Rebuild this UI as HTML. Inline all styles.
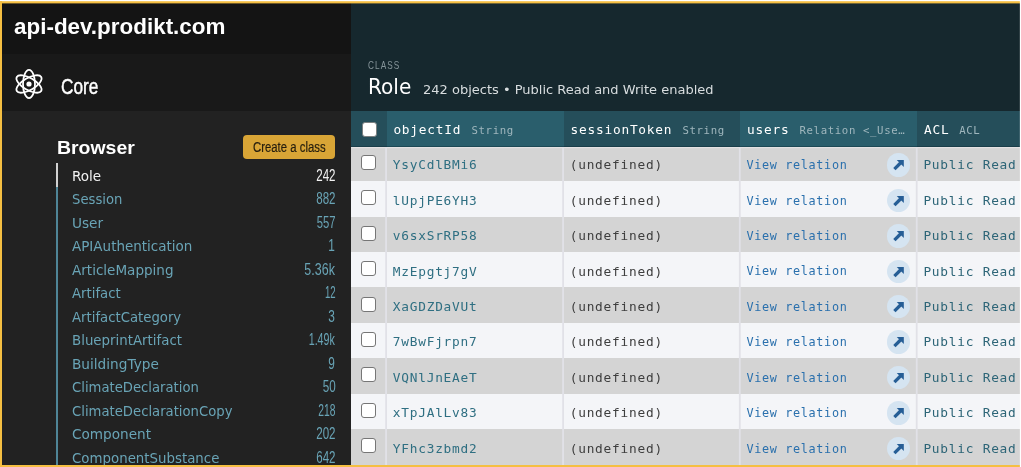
<!DOCTYPE html>
<html lang="en"><head><meta charset="utf-8"><title>Parse Dashboard</title>
<style>
*{box-sizing:border-box;margin:0;padding:0}
html,body{width:1021px;height:467px;overflow:hidden;background:#fff}
body{position:relative;font-family:"Liberation Sans",sans-serif}
#wrap{position:absolute;left:0;top:0;width:1021px;height:467px;will-change:transform}
.abs,.t{position:absolute}
.t{white-space:nowrap;line-height:1;top:0}
#side{left:2px;top:3px;width:349px;height:462px;background:#222;overflow:hidden}
#hdr{left:2px;top:3px;width:349px;height:51px;background:#141414}
#core{left:2px;top:54px;width:349px;height:57px;background:#191919}
#btn{left:243.4px;top:135px;width:91.6px;height:24px;border-radius:4px;background:#d9a536}
#line{left:56px;top:187px;width:2px;height:280px;background:#4f8597}
#linesel{left:56px;top:163px;width:2px;height:24px;background:#d2d2d2}
#main{left:351px;top:3px;width:669px;height:462px;background:#16282e;overflow:hidden}
#th{left:351px;top:111px;width:669px;height:36px;background:#254e5a}
.cb{position:absolute;left:361.3px;width:15px;height:15px;border:1px solid #767676;border-radius:3px;background:#fff}
.row{position:absolute;left:351px;width:669px;height:37px;background:#d4d4d4}
.sep{position:absolute;top:147px;width:1px;height:320px;background:#e1e1e7}
.row.e{background:#f4f5f8}
.ar{position:absolute;left:886.6px;width:23.5px;height:23.5px;border-radius:50%;background:#d5e4f1}
.fr{position:absolute;background:#f5bf42}
.f0{font:bold 21.2px 'Liberation Sans','DejaVu Sans',sans-serif;line-height:1;color:#fff;}
.f1{font:21.3px 'Liberation Sans','DejaVu Sans',sans-serif;line-height:1;color:#fff;-webkit-text-stroke:.42px #fff;}
.f2{font:bold 19px 'Liberation Sans','DejaVu Sans',sans-serif;line-height:1;color:#fff;}
.f3{font:15.3px 'Liberation Sans','DejaVu Sans',sans-serif;line-height:1;color:#241d0e;-webkit-text-stroke:.2px #241d0e;}
.f4{font:14.2px 'DejaVu Sans','Liberation Sans',sans-serif;line-height:1;color:#f2f2f2;}
.f5{font:15.9px 'Liberation Sans','DejaVu Sans',sans-serif;line-height:1;color:#f2f2f2;}
.f6{font:14.2px 'DejaVu Sans','Liberation Sans',sans-serif;line-height:1;color:#69a4b6;}
.f7{font:15.9px 'Liberation Sans','DejaVu Sans',sans-serif;line-height:1;color:#69a4b6;}
.f8{font:11.4px 'Liberation Sans','DejaVu Sans',sans-serif;line-height:1;color:#86959a;letter-spacing:1.5px;}
.f9{font:20.5px 'DejaVu Sans','Liberation Sans',sans-serif;line-height:1;color:#fff;}
.f10{font:12.8px 'DejaVu Sans','Liberation Sans',sans-serif;line-height:1;color:#d8dddf;}
.f11{font:12.8px 'DejaVu Sans Mono','Liberation Mono',monospace;line-height:1;color:#2f6f82;letter-spacing:.765px;}
.f12{font:12.8px 'DejaVu Sans Mono','Liberation Mono',monospace;line-height:1;color:#3e3e3e;letter-spacing:.765px;}
.f13{font:11.8px 'DejaVu Sans Mono','Liberation Mono',monospace;line-height:1;color:#2a70ad;letter-spacing:.66px;}
.f14{font:12.8px 'DejaVu Sans Mono','Liberation Mono',monospace;line-height:1;color:#2d6577;letter-spacing:.765px;}
.f15{font:12.8px 'DejaVu Sans Mono','Liberation Mono',monospace;line-height:1;color:#fff;letter-spacing:.765px;}
.f16{font:10.7px 'DejaVu Sans Mono','Liberation Mono',monospace;line-height:1;color:#9fb6bd;letter-spacing:.62px;}
</style></head><body><div id="wrap">
<aside>
<div id="side" class="abs"></div><div id="hdr" class="abs"></div><div id="core" class="abs"></div>
<svg class="abs" style="left:14px;top:69px" width="30" height="30" viewBox="-15 -15 30 30" fill="none" stroke="#fff" stroke-width="1.8">
<ellipse rx="6" ry="14.1"/><ellipse rx="6" ry="14.1" transform="rotate(60)"/><ellipse rx="6" ry="14.1" transform="rotate(-60)"/><circle r="2.6" fill="#fff" stroke="none"/></svg>
<div id="btn" class="abs"></div><div id="line" class="abs"></div><div id="linesel" class="abs"></div>
<div class="t f0" style="left:14.20px;top:16.00px;transform:scaleX(1.0588);transform-origin:0 0">api-dev.prodikt.com</div>
<div class="t f1" style="left:60.90px;top:77.20px;transform:scaleX(0.8100);transform-origin:0 0">Core</div>
<div class="t f2" style="left:56.90px;top:137.70px;transform:scaleX(1.0233);transform-origin:0 0">Browser</div>
<div class="t f3" style="left:252.90px;top:139.40px;transform:scaleX(0.7425);transform-origin:0 0">Create a class</div>
<div class="t f4" style="left:71.60px;top:168.70px;transform:scaleX(0.9549);transform-origin:0 0">Role</div>
<div class="t f5" style="right:685.80px;top:167.70px;transform:scaleX(0.7279);transform-origin:100% 0">242</div>
<div class="t f6" style="left:71.60px;top:192.22px;transform:scaleX(0.9309);transform-origin:0 0">Session</div>
<div class="t f7" style="right:685.80px;top:191.22px;transform:scaleX(0.7279);transform-origin:100% 0">882</div>
<div class="t f6" style="left:71.60px;top:215.74px;transform:scaleX(0.9615);transform-origin:0 0">User</div>
<div class="t f7" style="right:685.80px;top:214.74px;transform:scaleX(0.7090);transform-origin:100% 0">557</div>
<div class="t f6" style="left:71.60px;top:239.26px;transform:scaleX(0.9511);transform-origin:0 0">APIAuthentication</div>
<div class="t f7" style="right:685.80px;top:238.26px;transform:scaleX(0.7463);transform-origin:100% 0">1</div>
<div class="t f6" style="left:71.60px;top:262.78px;transform:scaleX(0.9539);transform-origin:0 0">ArticleMapping</div>
<div class="t f7" style="right:685.80px;top:261.78px;transform:scaleX(0.7846);transform-origin:100% 0">5.36k</div>
<div class="t f6" style="left:71.60px;top:286.30px;transform:scaleX(0.9346);transform-origin:0 0">Artifact</div>
<div class="t f7" style="right:685.80px;top:285.30px;transform:scaleX(0.6049);transform-origin:100% 0">12</div>
<div class="t f6" style="left:71.60px;top:309.82px;transform:scaleX(0.9341);transform-origin:0 0">ArtifactCategory</div>
<div class="t f7" style="right:685.80px;top:308.82px;transform:scaleX(0.7463);transform-origin:100% 0">3</div>
<div class="t f6" style="left:71.60px;top:333.34px;transform:scaleX(0.9416);transform-origin:0 0">BlueprintArtifact</div>
<div class="t f7" style="right:685.80px;top:332.34px;transform:scaleX(0.6740);transform-origin:100% 0">1.49k</div>
<div class="t f6" style="left:71.60px;top:356.86px;transform:scaleX(0.9629);transform-origin:0 0">BuildingType</div>
<div class="t f7" style="right:685.80px;top:355.86px;transform:scaleX(0.7463);transform-origin:100% 0">9</div>
<div class="t f6" style="left:71.60px;top:380.38px;transform:scaleX(0.9304);transform-origin:0 0">ClimateDeclaration</div>
<div class="t f7" style="right:685.80px;top:379.38px;transform:scaleX(0.7350);transform-origin:100% 0">50</div>
<div class="t f6" style="left:71.60px;top:403.90px;transform:scaleX(0.9310);transform-origin:0 0">ClimateDeclarationCopy</div>
<div class="t f7" style="right:685.80px;top:402.90px;transform:scaleX(0.6487);transform-origin:100% 0">218</div>
<div class="t f6" style="left:71.60px;top:427.42px;transform:scaleX(0.9602);transform-origin:0 0">Component</div>
<div class="t f7" style="right:685.80px;top:426.42px;transform:scaleX(0.7279);transform-origin:100% 0">202</div>
<div class="t f6" style="left:71.60px;top:450.94px;transform:scaleX(0.9416);transform-origin:0 0">ComponentSubstance</div>
<div class="t f7" style="right:685.80px;top:449.94px;transform:scaleX(0.7279);transform-origin:100% 0">642</div>
</aside>
<main>
<div id="main" class="abs"></div>
<div class="row" style="top:145.65px"></div>
<div class="cb" style="top:154.75px"></div>
<svg class="ar" style="top:153.15px" viewBox="0 0 20 20"><path d="M8.3 6h6v5.9z" fill="#265e96"/><path d="M6.3 13.7L11.9 8.1" stroke="#265e96" stroke-width="2.8" fill="none"/></svg>
<div class="row e" style="top:181.10px"></div>
<div class="cb" style="top:190.20px"></div>
<svg class="ar" style="top:188.60px" viewBox="0 0 20 20"><path d="M8.3 6h6v5.9z" fill="#265e96"/><path d="M6.3 13.7L11.9 8.1" stroke="#265e96" stroke-width="2.8" fill="none"/></svg>
<div class="row" style="top:216.55px"></div>
<div class="cb" style="top:225.65px"></div>
<svg class="ar" style="top:224.05px" viewBox="0 0 20 20"><path d="M8.3 6h6v5.9z" fill="#265e96"/><path d="M6.3 13.7L11.9 8.1" stroke="#265e96" stroke-width="2.8" fill="none"/></svg>
<div class="row e" style="top:252.00px"></div>
<div class="cb" style="top:261.10px"></div>
<svg class="ar" style="top:259.50px" viewBox="0 0 20 20"><path d="M8.3 6h6v5.9z" fill="#265e96"/><path d="M6.3 13.7L11.9 8.1" stroke="#265e96" stroke-width="2.8" fill="none"/></svg>
<div class="row" style="top:287.45px"></div>
<div class="cb" style="top:296.55px"></div>
<svg class="ar" style="top:294.95px" viewBox="0 0 20 20"><path d="M8.3 6h6v5.9z" fill="#265e96"/><path d="M6.3 13.7L11.9 8.1" stroke="#265e96" stroke-width="2.8" fill="none"/></svg>
<div class="row e" style="top:322.90px"></div>
<div class="cb" style="top:332.00px"></div>
<svg class="ar" style="top:330.40px" viewBox="0 0 20 20"><path d="M8.3 6h6v5.9z" fill="#265e96"/><path d="M6.3 13.7L11.9 8.1" stroke="#265e96" stroke-width="2.8" fill="none"/></svg>
<div class="row" style="top:358.35px"></div>
<div class="cb" style="top:367.45px"></div>
<svg class="ar" style="top:365.85px" viewBox="0 0 20 20"><path d="M8.3 6h6v5.9z" fill="#265e96"/><path d="M6.3 13.7L11.9 8.1" stroke="#265e96" stroke-width="2.8" fill="none"/></svg>
<div class="row e" style="top:393.80px"></div>
<div class="cb" style="top:402.90px"></div>
<svg class="ar" style="top:401.30px" viewBox="0 0 20 20"><path d="M8.3 6h6v5.9z" fill="#265e96"/><path d="M6.3 13.7L11.9 8.1" stroke="#265e96" stroke-width="2.8" fill="none"/></svg>
<div class="row" style="top:429.25px"></div>
<div class="cb" style="top:438.35px"></div>
<svg class="ar" style="top:436.75px" viewBox="0 0 20 20"><path d="M8.3 6h6v5.9z" fill="#265e96"/><path d="M6.3 13.7L11.9 8.1" stroke="#265e96" stroke-width="2.8" fill="none"/></svg>
<div id="th" class="abs"></div>
<div class="abs" style="left:387px;top:111px;width:177px;height:36px;background:#2a5e6c"></div>
<div class="abs" style="left:740px;top:111px;width:177px;height:36px;background:#2a5e6c"></div>
<div class="abs" style="left:351px;top:147px;width:669px;height:1px;background:#e4e2e3"></div>
<div class="abs" style="left:351px;top:148px;width:669px;height:1px;background:#e4e2e3;opacity:.2"></div>
<div class="abs" style="left:351px;top:146px;width:669px;height:1px;background:#06222c;opacity:.35"></div>
<div class="sep" style="left:385px;opacity:0.80"></div>
<div class="sep" style="left:386px;opacity:1.00"></div>
<div class="sep" style="left:562px;opacity:0.80"></div>
<div class="sep" style="left:563px;opacity:1.00"></div>
<div class="sep" style="left:738px;opacity:0.10"></div>
<div class="sep" style="left:739px;opacity:1.00"></div>
<div class="sep" style="left:740px;opacity:0.70"></div>
<div class="sep" style="left:915px;opacity:0.20"></div>
<div class="sep" style="left:916px;opacity:1.00"></div>
<div class="sep" style="left:917px;opacity:0.60"></div>
<div class="cb" style="left:362px;top:121.5px;border-color:#7a7f80"></div>
<div class="t f8" style="left:367.80px;top:59.80px;transform:scaleX(0.7223);transform-origin:0 0">CLASS</div>
<div class="t f9" style="left:368.00px;top:77.10px;transform:scaleX(0.9799);transform-origin:0 0">Role</div>
<div class="t f10" style="left:423.30px;top:84.10px;transform:scaleX(1.0160);transform-origin:0 0">242 objects • Public Read and Write enabled</div>
<div class="t f11" style="left:392.80px;top:159.15px">YsyCdlBMi6</div>
<div class="t f12" style="left:569.70px;top:159.15px">(undefined)</div>
<div class="t f13" style="left:746.50px;top:160.05px">View relation</div>
<div class="t f14" style="left:923.40px;top:159.15px">Public Read + Write</div>
<div class="t f11" style="left:392.80px;top:194.60px">lUpjPE6YH3</div>
<div class="t f12" style="left:569.70px;top:194.60px">(undefined)</div>
<div class="t f13" style="left:746.50px;top:195.50px">View relation</div>
<div class="t f14" style="left:923.40px;top:194.60px">Public Read + Write</div>
<div class="t f11" style="left:392.80px;top:230.05px">v6sxSrRP58</div>
<div class="t f12" style="left:569.70px;top:230.05px">(undefined)</div>
<div class="t f13" style="left:746.50px;top:230.95px">View relation</div>
<div class="t f14" style="left:923.40px;top:230.05px">Public Read + Write</div>
<div class="t f11" style="left:392.80px;top:265.50px">MzEpgtj7gV</div>
<div class="t f12" style="left:569.70px;top:265.50px">(undefined)</div>
<div class="t f13" style="left:746.50px;top:266.40px">View relation</div>
<div class="t f14" style="left:923.40px;top:265.50px">Public Read + Write</div>
<div class="t f11" style="left:392.80px;top:300.95px">XaGDZDaVUt</div>
<div class="t f12" style="left:569.70px;top:300.95px">(undefined)</div>
<div class="t f13" style="left:746.50px;top:301.85px">View relation</div>
<div class="t f14" style="left:923.40px;top:300.95px">Public Read + Write</div>
<div class="t f11" style="left:392.80px;top:336.40px">7wBwFjrpn7</div>
<div class="t f12" style="left:569.70px;top:336.40px">(undefined)</div>
<div class="t f13" style="left:746.50px;top:337.30px">View relation</div>
<div class="t f14" style="left:923.40px;top:336.40px">Public Read + Write</div>
<div class="t f11" style="left:392.80px;top:371.85px">VQNlJnEAeT</div>
<div class="t f12" style="left:569.70px;top:371.85px">(undefined)</div>
<div class="t f13" style="left:746.50px;top:372.75px">View relation</div>
<div class="t f14" style="left:923.40px;top:371.85px">Public Read + Write</div>
<div class="t f11" style="left:392.80px;top:407.30px">xTpJAlLv83</div>
<div class="t f12" style="left:569.70px;top:407.30px">(undefined)</div>
<div class="t f13" style="left:746.50px;top:408.20px">View relation</div>
<div class="t f14" style="left:923.40px;top:407.30px">Public Read + Write</div>
<div class="t f11" style="left:392.80px;top:442.75px">YFhc3zbmd2</div>
<div class="t f12" style="left:569.70px;top:442.75px">(undefined)</div>
<div class="t f13" style="left:746.50px;top:443.65px">View relation</div>
<div class="t f14" style="left:923.40px;top:442.75px">Public Read + Write</div>
<div class="t f15" style="left:393.40px;top:123.90px">objectId</div>
<div class="t f16" style="left:471.50px;top:125.90px">String</div>
<div class="t f15" style="left:570.60px;top:123.90px">sessionToken</div>
<div class="t f16" style="left:682.44px;top:125.90px">String</div>
<div class="t f15" style="left:747.00px;top:123.90px">users</div>
<div class="t f16" style="left:799.50px;top:125.90px">Relation &lt;_Use…</div>
<div class="t f15" style="left:924.10px;top:123.90px">ACL</div>
<div class="t f16" style="left:959.20px;top:125.90px">ACL</div>
</main>
<div class="fr" style="left:0;top:1px;width:1020px;height:2px"></div>
<div class="fr" style="left:0;top:1px;width:1020px;height:1px;background:#fff;opacity:.2"></div>
<div class="fr" style="left:0;top:3px;width:351px;height:1px;background:#6e5826"></div>
<div class="fr" style="left:351px;top:3px;width:669px;height:1px;background:#6f6436"></div>
<div class="fr" style="left:0;top:1px;width:2px;height:466px"></div>
<div class="fr" style="left:0;top:465px;width:1020px;height:2px"></div>
<div class="fr" style="left:1020px;top:0;width:1px;height:467px;background:#fff"></div>
<div class="fr" style="left:1019px;top:0;width:1px;height:467px;background:#fff;opacity:.12"></div>
</div></body></html>
